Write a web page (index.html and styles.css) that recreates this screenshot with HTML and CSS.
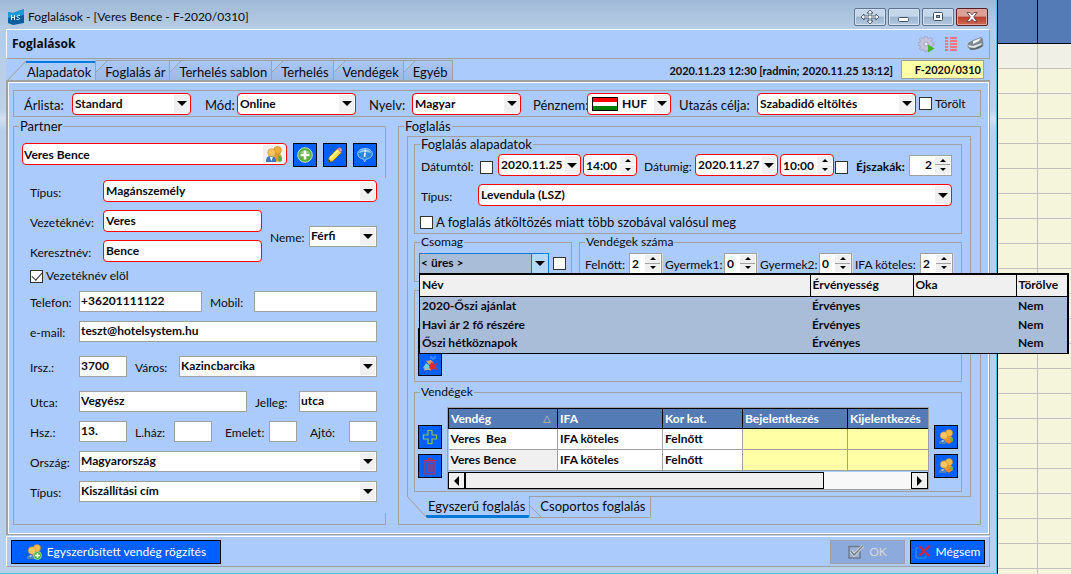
FILE: index.html
```html
<!DOCTYPE html>
<html lang="hu">
<head>
<meta charset="utf-8">
<title>Foglalások - [Veres Bence - F-2020/0310]</title>
<link rel="stylesheet" href="styles.css">
</head>
<body>
<svg class="defs" aria-hidden="true">
  <symbol id="people" viewBox="0 0 16 16">
    <path d="M8 12c0-4 1.500-5 4-5s3.500 2 3.500 6l-2 1.500H9z" fill="#e39a2e"/>
    <path d="M12 9l3 1 .5 4-3 1z" fill="#4db33d"/>
    <circle cx="11.300" cy="4" r="3.600" fill="#f0ac38" stroke="#b97a1a" stroke-width=".5"/>
    <path d="M.5 15c-.3-4 1.500-5.500 4.500-5.500S10 11 10 15z" fill="#3f78c2"/>
    <path d="M4 10l1.500 4L7 10z" fill="#fff"/>
    <circle cx="5.800" cy="6.200" r="3.700" fill="#f7c35c" stroke="#bd8120" stroke-width=".5"/>
  </symbol>
  <symbol id="people-pair" viewBox="0 0 16 16">
    <path d="M6 13c0-4 2-6 5-6s4 2 4 5l-3 2z" fill="#ee9a28"/>
    <path d="M12 9l3 0v3l-2 1z" fill="#5fb84a"/>
    <circle cx="11" cy="4" r="3.600" fill="#f8bc48" stroke="#c27e1c" stroke-width=".5"/>
    <path d="M1 15c0-3 1-4 4-4l4 1-1 3z" fill="#4b80bd"/>
    <path d="M3 12l2 1 1-2z" fill="#dfeaf8"/>
    <circle cx="6" cy="6.500" r="3.700" fill="#fbc65f" stroke="#c88927" stroke-width=".5"/>
    <path d="M7 12l4-2 2 2-2 3z" fill="#f3822b"/>
  </symbol>
  <symbol id="add" viewBox="0 0 16 16">
    <circle cx="8" cy="8" r="7.300" fill="#5cae3c" stroke="#d5ecd0" stroke-width=".9"/>
    <path d="M3 6a5.500 4.500 0 0 1 10 0z" fill="#8fce6f"/>
    <path d="M6.700 3.500h2.600v3.200h3.200v2.600H9.300v3.200H6.700V9.300H3.500V6.700h3.200z" fill="#fff"/>
  </symbol>
  <symbol id="pencil" viewBox="0 0 16 16">
    <path d="M1 15l1.200-5L10.500 1.500l4 4L6 14z" fill="#ffdf4d" stroke="#8b6a12" stroke-width=".8"/>
    <path d="M3 11.500L11.500 3" stroke="#fff6b5" stroke-width="1.500"/>
    <path d="M10.500 2L12 .7c1.500-.7 3.700 1.500 3 3L14 5.500z" fill="#e89ba0" stroke="#7e5252" stroke-width=".5"/>
    <path d="M1 15l.8-2.500L3.500 14z" fill="#222"/>
  </symbol>
  <symbol id="info" viewBox="0 0 16 16">
    <path d="M8 1.500c4 0 7.300 2 7.300 5.300S12 12 9 12l-1.500 3-1-3C3 11.800.7 9.500.7 6.800.7 3.500 4 1.500 8 1.500z" fill="#2f87dd" stroke="#a9d8ff" stroke-width=".9"/>
    <path d="M2 6c1-5 11-5 12 0-3-1.500-9-1.500-12 0z" fill="#8dc6f7"/>
    <path d="M8.300 3v1.400M8.100 5.500L7.500 10" stroke="#fff" stroke-width="1.600"/>
  </symbol>
  <symbol id="plus-outline" viewBox="0 0 16 16">
    <path d="M6 1.500h4V6h4.500v4H10v4.500H6V10H1.500V6H6z" fill="none" stroke="#8bc34a" stroke-width="1.200"/>
  </symbol>
  <symbol id="trash" viewBox="0 0 16 18">
    <path d="M3 5h10v12H3zM1.500 3.500h13M5.500 3.500l1-2h3l1 2M6 7v8M8 7v8M10 7v8" fill="none" stroke="#c22f51" stroke-width="1.200"/>
  </symbol>
  <symbol id="gift" viewBox="0 0 16 16">
    <path d="M4 5l5-1 3 3-4 3z" fill="#d9a066"/>
    <path d="M1 12l3-5 4 3 1 3-4 1z" fill="#7fc6e8"/>
    <path d="M7 9l3-3 2 2 3-1-1 3 1 4-4-1-3 2z" fill="#d92b35"/>
    <path d="M9 0v3M11 1v3M13 0v3" stroke="#7fb6ff" stroke-width=".8"/>
    <path d="M2 14l4-1 3 1" stroke="#e8b070" fill="none"/>
  </symbol>
</svg>

<div class="desktop">
<main class="window">
  <header class="titlebar">
    <svg class="app-icon" viewBox="0 0 16 16"><path d="M0 3l5 1 11-4v14L5 16l-5-2z" fill="#0b5e9e"/><path d="M0 3l5 1 11-4v6L0 9z" fill="#1f9ad8"/><path d="M3.500 6v5M6.500 6v5M3.500 8.500h3M12 6.500c-3-1-4 1.500-2 2s2.500 2.500-1.500 2" fill="none" stroke="#d9f1ff"/></svg>
    <h1 class="title">Foglalások - [Veres Bence - F-2020/0310]</h1>
    <div class="win-buttons">
      <button class="win" aria-label="Mozgatás"><svg width="18" height="14" viewBox="0 0 18 14"><path d="M9 0l3 3h-2v3h5V4l3 3-3 3V8h-5v3h2l-3 3-3-3h2V8H3v2L0 7l3-3v2h5V3H6z" fill="#f2f6fb" stroke="#3b4a5c" stroke-width=".8"/></svg></button>
      <button class="win" aria-label="Kis méret"><svg width="12" height="12" viewBox="0 0 12 12"><rect x=".5" y="6.500" width="10" height="4" rx="1" fill="#fff" stroke="#41536a"/></svg></button>
      <button class="win" aria-label="Teljes méret"><svg width="12" height="12" viewBox="0 0 12 12"><rect x="1.500" y="1.500" width="9" height="8" rx="1" fill="#fff" stroke="#41536a"/><rect x="4.500" y="4.500" width="3" height="2" fill="#9ab" stroke="#41536a"/></svg></button>
      <button class="win close" aria-label="Bezárás"><svg width="12" height="12" viewBox="0 0 12 12"><path d="M1 1.500h3l2 2.300 2-2.300h3L7.700 6l3.300 4.500H8L6 8.200 4 10.500H1L4.300 6z" fill="#fff" stroke="#5b3a40" stroke-width=".9"/></svg></button>
    </div>
  </header>

  <section class="headline">
    <h2>Foglalások</h2>
    <div class="tools">
      <svg width="17" height="17" viewBox="0 0 17 17"><path d="M7 0h2l.5 2 1.500.6L13 1.500 14.500 3l-1 2 .6 1.500 2 .5v2l-2 .5-.6 1.500 1 2-1.500 1.500-2-1-1.500.6L9 16H7l-.5-2-1.500-.6-2 1L1.500 13l1-2L2 9.500 0 9V7l2-.5L2.500 5l-1-2L3 1.500l2 1L6.500 2z" fill="#c3c3dc" stroke="#9494b2" stroke-width=".6"/><circle cx="8" cy="8" r="2" fill="#e6ecfb" stroke="#8989a8" stroke-width=".7"/><path d="M10 8.500l6.500 4-6.500 4z" fill="#45b52d"/></svg>
      <svg width="12" height="14" viewBox="0 0 12 14"><path d="M0 1h3M0 4h3M0 7h3M0 10h3M0 13h3M5 1h7M5 4h7M5 7h7M5 10h7M5 13h7" stroke="#fb7480" stroke-width="2"/></svg>
      <svg width="17" height="14" viewBox="0 0 17 14"><path d="M1 6l5-3 8-3 2 2 .5 7-5 3-8 1-3-3z" fill="#7d8890"/><path d="M6 4l8-3-2 3-6 3z" fill="#eef3f5"/><path d="M1 8l5 1 9-3-1 2-7 3-5-1z" fill="#dfe6e8"/><path d="M3 12l5 0 7-3" stroke="#45525a" fill="none"/></svg>
    </div>
  </section>

  <nav class="tabs">
    <button class="tab active">Alapadatok</button><button class="tab">Foglalás ár</button><button class="tab">Terhelés sablon</button><button class="tab">Terhelés</button><button class="tab">Vendégek</button><button class="tab">Egyéb</button>
    <span class="stamp">2020.11.23 12:30 [radmin; 2020.11.25 13:12]</span>
    <input class="code" aria-label="Foglalás száma" value="F-2020/0310">
  </nav>

  <section class="page">
    <div class="filters">
      <label for="arlista">Árlista:</label>
      <span class="combo req"><select id="arlista"><option>Standard</option></select><i class="arrow"></i></span>
      <label for="mod">Mód:</label>
      <span class="combo req"><select id="mod"><option>Online</option></select><i class="arrow"></i></span>
      <label for="nyelv">Nyelv:</label>
      <span class="combo req"><select id="nyelv"><option>Magyar</option></select><i class="arrow"></i></span>
      <label for="penznem">Pénznem:</label>
      <span class="combo req flagged"><i class="flag"></i><select id="penznem"><option>HUF</option></select><i class="arrow"></i></span>
      <label for="cel">Utazás célja:</label>
      <span class="combo req"><select id="cel"><option>Szabadidő eltöltés</option></select><i class="arrow"></i></span>
      <span class="check"><input type="checkbox" id="torolt"><label for="torolt">Törölt</label></span>
    </div>

    <div class="columns">
      <fieldset class="box partner">
        <legend>Partner</legend>
        <div class="search">
          <span class="field req lookup"><input aria-label="Partner" value="Veres Bence"><button class="pick" aria-label="Partner keresése"><svg width="18" height="17"><use href="#people"/></svg></button></span>
          <button class="sq" aria-label="Új partner"><svg width="16" height="16"><use href="#add"/></svg></button>
          <button class="sq" aria-label="Szerkesztés"><svg width="16" height="16"><use href="#pencil"/></svg></button>
          <button class="sq" aria-label="Információ"><svg width="16" height="16"><use href="#info"/></svg></button>
        </div>
        <div class="form names">
          <label for="ptipus">Típus:</label>
          <span class="combo req wide"><select id="ptipus"><option>Magánszemély</option></select><i class="arrow"></i></span>
          <label for="vnev">Vezetéknév:</label>
          <input class="text req" id="vnev" value="Veres">
          <label class="tall" for="neme">Neme:</label>
          <span class="combo tall"><select id="neme"><option>Férfi</option></select><i class="arrow"></i></span>
          <label for="knev">Keresztnév:</label>
          <input class="text req" id="knev" value="Bence">
        </div>
        <div class="check order"><input type="checkbox" id="elol" checked><label for="elol">Vezetéknév elöl</label></div>
        <div class="form row phone">
          <label for="tel">Telefon:</label><input class="text" id="tel" value="+36201111122">
          <label for="mobil">Mobil:</label><input class="text" id="mobil">
        </div>
        <div class="form row single"><label for="email">e-mail:</label><input class="text" id="email" value="teszt@hotelsystem.hu"></div>
        <div class="form row city">
          <label for="irsz">Irsz.:</label><input class="text" id="irsz" value="3700">
          <label for="varos">Város:</label><span class="combo"><select id="varos"><option>Kazincbarcika</option></select><i class="arrow"></i></span>
        </div>
        <div class="form row street">
          <label for="utca">Utca:</label><input class="text" id="utca" value="Vegyész">
          <label for="jelleg">Jelleg:</label><input class="text" id="jelleg" value="utca">
        </div>
        <div class="form row house">
          <label for="hsz">Hsz.:</label><input class="text" id="hsz" value="13.">
          <label for="lhaz">L.ház:</label><input class="text" id="lhaz">
          <label for="emelet">Emelet:</label><input class="text" id="emelet">
          <label for="ajto">Ajtó:</label><input class="text" id="ajto">
        </div>
        <div class="form row single"><label for="orszag">Ország:</label><span class="combo"><select id="orszag"><option>Magyarország</option></select><i class="arrow"></i></span></div>
        <div class="form row single"><label for="ctipus">Típus:</label><span class="combo"><select id="ctipus"><option>Kiszállítási cím</option></select><i class="arrow"></i></span></div>
      </fieldset>

      <fieldset class="box booking">
        <legend>Foglalás</legend>
        <div class="sheet">
          <fieldset class="box basics">
            <legend>Foglalás alapadatok</legend>
            <div class="dates">
              <label for="tol">Dátumtól:</label>
              <input type="checkbox" aria-label="Dátumtól rögzített">
              <span class="combo req"><select id="tol"><option>2020.11.25</option></select><i class="arrow narrow"></i></span>
              <span class="spin req"><input aria-label="Érkezés ideje" value="14:00"><span class="steps"><button aria-label="Fel"></button><button aria-label="Le"></button></span></span>
              <label for="ig">Dátumig:</label>
              <span class="combo req"><select id="ig"><option>2020.11.27</option></select><i class="arrow narrow"></i></span>
              <span class="spin req"><input aria-label="Távozás ideje" value="10:00"><span class="steps"><button aria-label="Fel"></button><button aria-label="Le"></button></span></span>
              <input type="checkbox" aria-label="Dátumig rögzített">
              <label for="ej" class="strong">Éjszakák:</label>
              <span class="spin right"><input id="ej" value="2"><span class="steps"><button aria-label="Fel"></button><button aria-label="Le"></button></span></span>
            </div>
            <div class="room">
              <label for="szoba">Típus:</label>
              <span class="combo req"><select id="szoba"><option>Levendula (LSZ)</option></select><i class="arrow"></i></span>
            </div>
            <div class="check long"><input type="checkbox" id="tobb"><label for="tobb">A foglalás átköltözés miatt több szobával valósul meg</label></div>
          </fieldset>

          <div class="pair">
            <fieldset class="box package">
              <legend>Csomag</legend>
              <div class="package-row">
                <span class="combo open"><select aria-label="Csomag"><option>&lt; üres &gt;</option></select><i class="arrow"></i></span>
                <input type="checkbox" aria-label="Csomag rögzített">
              </div>
              <table class="dropdown">
                <colgroup><col><col class="c-103"><col class="c-103"><col class="c-52"></colgroup>
                <thead><tr><th>Név</th><th>Érvényesség</th><th>Oka</th><th>Törölve</th></tr></thead>
                <tbody>
                  <tr><td>2020-Őszi ajánlat</td><td>Érvényes</td><td></td><td>Nem</td></tr>
                  <tr><td>Havi ár 2 fő részére</td><td>Érvényes</td><td></td><td>Nem</td></tr>
                  <tr><td>Őszi hétköznapok</td><td>Érvényes</td><td></td><td>Nem</td></tr>
                </tbody>
              </table>
            </fieldset>
            <fieldset class="box counts">
              <legend>Vendégek száma</legend>
              <div class="count-row">
                <label for="felnott">Felnőtt:</label><span class="spin"><input id="felnott" value="2"><span class="steps"><button aria-label="Fel"></button><button aria-label="Le"></button></span></span>
                <label for="gy1">Gyermek1:</label><span class="spin"><input id="gy1" value="0"><span class="steps"><button aria-label="Fel"></button><button aria-label="Le"></button></span></span>
                <label for="gy2">Gyermek2:</label><span class="spin"><input id="gy2" value="0"><span class="steps"><button aria-label="Fel"></button><button aria-label="Le"></button></span></span>
                <label for="ifa">IFA köteles:</label><span class="spin"><input id="ifa" value="2"><span class="steps"><button aria-label="Fel"></button><button aria-label="Le"></button></span></span>
              </div>
            </fieldset>
          </div>

          <div class="box extras">
            <button class="sq" aria-label="Hozzáadás"></button>
            <button class="sq" aria-label="Kedvezmény"><svg width="16" height="16"><use href="#gift"/></svg></button>
          </div>

          <fieldset class="box guests">
            <legend>Vendégek</legend>
            <div class="guest-row">
              <div class="side">
                <button class="sq" aria-label="Vendég hozzáadása"><svg width="16" height="16"><use href="#plus-outline"/></svg></button>
                <button class="sq" aria-label="Vendég törlése"><svg width="16" height="18"><use href="#trash"/></svg></button>
              </div>
              <div class="grid">
                <table>
                  <colgroup><col class="g-1"><col class="g-2"><col class="g-3"><col class="g-2"><col></colgroup>
                  <thead><tr><th><span class="sorted">Vendég<svg width="8" height="8" viewBox="0 0 8 8"><path d="M4 .8L7.300 7.500H.7z" fill="none" stroke="#b9b9a8" stroke-width=".8"/></svg></span></th><th>IFA</th><th>Kor kat.</th><th>Bejelentkezés</th><th>Kijelentkezés</th></tr></thead>
                  <tbody>
                    <tr><td class="two">Veres  Bea</td><td>IFA köteles</td><td>Felnőtt</td><td class="hot"></td><td class="hot"></td></tr>
                    <tr><td class="sel">Veres Bence</td><td>IFA köteles</td><td>Felnőtt</td><td class="hot"></td><td class="hot"></td></tr>
                  </tbody>
                </table>
                <div class="scroll">
                  <button aria-label="Balra"><i class="tri left"></i></button><span class="thumb"></span><span class="track"></span><button aria-label="Jobbra"><i class="tri"></i></button>
                </div>
              </div>
              <div class="side">
                <button class="sq" aria-label="Bejelentkezés"><svg width="16" height="16"><use href="#people-pair"/></svg></button>
                <button class="sq" aria-label="Kijelentkezés"><svg width="16" height="16"><use href="#people-pair"/></svg></button>
              </div>
            </div>
          </fieldset>
        </div>
        <nav class="low-tabs"><button class="low active">Egyszerű foglalás</button><button class="low">Csoportos foglalás</button></nav>
      </fieldset>
    </div>
  </section>

  <footer class="footer">
    <button class="cmd guest"><svg width="16" height="16" viewBox="0 0 16 16"><use href="#people-pair"/><circle cx="11.500" cy="11.500" r="4" fill="#4fae3a" stroke="#d8f0d0" stroke-width=".6"/><path d="M11.500 9v5M9 11.500h5" stroke="#fff" stroke-width="1.400"/></svg>Egyszerűsített vendég rögzítés</button>
    <button class="cmd ok" disabled><svg width="16" height="14" viewBox="0 0 16 14"><path d="M1 1.500h11v11.500H1z" fill="#9db3d6" stroke="#6d7a90" stroke-width="1.500"/><path d="M3 6l3 4L15 .8" fill="none" stroke="#e6e6e6" stroke-width="3"/><path d="M3 6l3 4L15 .8" fill="none" stroke="#737b88" stroke-width="1.500"/></svg>OK</button>
    <button class="cmd cancel"><svg width="16" height="14" viewBox="0 0 16 14"><path d="M3 3H1v10h10v-3" fill="none" stroke="#2f9bd8"/><path d="M4 1l10 10M15 .5L4 11" stroke="#d4253c" stroke-width="2"/></svg>Mégsem</button>
  </footer>
</main>

<aside class="calendar">
  <div class="cal-head"></div><div class="cal-head"></div>
</aside>
</div>
</body>
</html>
```

FILE: styles.css
```css
* { box-sizing: border-box; }

body {
  margin: 0;
  font: 12px/14px Lato, "Open Sans", sans-serif;
  color: #0a0a14;
}

button, input, select { font: inherit; color: inherit; margin: 0; }
button { padding: 0; cursor: default; }
i { font-style: normal; }
svg { display: block; flex: none; }
.defs { position: absolute; width: 0; height: 0; }

.desktop { display: flex; min-height: 100vh; }

/* window frame */
.window {
  flex: 1;
  min-width: 0;
  display: flex;
  flex-direction: column;
  padding: 0 7px 6px 6px;
  background: linear-gradient(#9fb9d6, #b6cce4 28px, #bdd2e9 110px, #d3e1f0 118px, #b9d0ea 130px);
  border-right: 1px solid #000;
  border-bottom: 1px solid #38c4dc;
  box-shadow: inset -1px 0 #4cc3e4;
}

.titlebar { display: flex; align-items: center; height: 29px; padding: 5px 2px 0; gap: 4px; }
.app-icon { width: 16px; height: 16px; }
.title { flex: 1; margin: 0; font-weight: normal; font-size: 12px; line-height: 16px; }
.win-buttons { display: flex; gap: 2px; }
.win {
  display: grid;
  place-items: center;
  width: 32px;
  height: 18px;
  border: 1px solid #5d7390;
  border-radius: 2px;
  background: linear-gradient(#c4d6ea 45%, #9db5d0 50%, #b4c9e0);
  box-shadow: inset 0 0 0 1px #d3e1f1;
}
.win.close {
  border-color: #5a1f25;
  background: linear-gradient(#dba196 45%, #b9402c 50%, #cf6a50);
  box-shadow: inset 0 0 0 1px #dba79e;
}

.headline {
  display: flex;
  align-items: center;
  justify-content: space-between;
  height: 30px;
  padding: 0 5px;
  background: #accbfd;
  border: 1px solid #a0a0a0;
  border-top-color: #fff;
  border-left-color: #fff;
}
.headline h2 { margin: 0; font: bold 12px/18px "Open Sans", sans-serif; }
.tools { display: flex; align-items: center; gap: 10px; }

/* main tabs */
.tabs {
  display: flex;
  height: 21px;
  padding: 1px 6px 0 1px;
  background: #accbfd;
}
.tab {
  border: 0;
  border-top: 1px solid #a0a0a0;
  border-right: 1px solid #a0a0a0;
  padding: 3px 4px 0 9px;
  font-size: 13px;
  text-align: right;
  white-space: nowrap;
  background:
    linear-gradient(to bottom right, #accbfd 46%, #a0a0a0 50%, transparent 54%) 0 0 / 11px 11px no-repeat,
    linear-gradient(#a9c7f8, #9cb9e4);
}
.tab.active {
  padding-left: 20px;
  border-top-color: #accbfd;
  background:
    linear-gradient(to bottom right, #accbfd 47%, #a0a0a0 50%, transparent 53%) 0 0 / 19px 20px no-repeat,
    linear-gradient(#0078d7, #0078d7) 19px 0 / 100% 2px no-repeat,
    #accbfd;
}
.stamp { margin-left: auto; padding: 4px 8px 0 0; font-weight: bold; font-size: 11px; white-space: nowrap; }
.code {
  width: 83px;
  height: 19px;
  padding: 0 2px;
  border: 1px solid #a0a0a0;
  background: #ffffa6;
  font-weight: bold;
  font-size: 11px;
  text-align: right;
}

.page {
  flex: 1;
  padding: 8px 8px 8px 5px;
  background: #accbfd;
  border: 2px solid #a0a0a0;
  border-bottom-width: 1px;
  border-right-width: 1px;
  box-shadow: inset 1px 1px #fff, inset -1px -1px #fff;
}

/* field parts */
.box { margin: 0; padding: 0; min-width: 0; border: 1px solid #a0a0a0; }
legend { padding: 0 1px; height: 14px; }
.partner > legend, .booking > legend, .basics > legend { font-size: 13px; }
.partner > legend, .booking > legend { margin-left: -3px; }
.package > legend { margin-left: 1px; }
.guests > legend { margin-left: 2px; }
label { padding-top: 3px; white-space: nowrap; }

.combo, .field, .spin {
  display: grid;
  grid-template-columns: 1fr auto;
  min-width: 0;
  height: 21px;
  background: #fff;
  border: 1px solid #a0a0a0;
}
.text { width: 100%; min-width: 0; height: 21px; padding: 0 1px 3px; border: 1px solid #a0a0a0; background: #fff; font-weight: bold; outline: 0; }
.combo.req, .field.req, .spin.req, .text.req { height: 22px; border: 1px solid #f00; border-radius: 4px; }
.text.req { padding: 0 2px 1px; }
.combo select, .field input, .spin input {
  grid-area: 1 / 1;
  width: 100%;
  min-width: 0;
  height: 18px;
  padding: 0 1px;
  border: 0;
  outline: 0;
  background: transparent;
  font-weight: bold;
  appearance: none;
}
.combo.req select { padding-left: 2px; }
.combo.req select, .field.req input, .spin.req input { height: 20px; }
.arrow { display: grid; place-items: center; width: 15px; margin: 1px; background: #f0f0f0; pointer-events: none; }
.arrow::before { content: ""; border: 5px solid transparent; border-top-color: #000; border-bottom: 0; }
.arrow.narrow { width: 14px; }
.spin input { padding: 0 2px; }
.steps { display: grid; grid-template-rows: 1fr 1fr; width: 15px; margin: 1px; background: #f0f0f0; }
.steps button { display: grid; place-items: center; border: 0; background: none; }
.steps button::before { content: ""; border: 3px solid transparent; border-bottom-color: #000; border-top: 0; }
.steps button:last-child::before { border-top: 3px solid #000; border-bottom: 0; }
.steps button:first-child { border-bottom: 1px solid #a0a0a0; }
.spin.req .steps button:first-child { border-bottom-color: #fff; }
.spin.right input { text-align: right; }

input[type="checkbox"] {
  appearance: none;
  flex: none;
  width: 13px;
  height: 13px;
  background: #fff;
  border: 1px solid #333;
}
input[type="checkbox"]:checked { display: grid; place-items: center; }
input[type="checkbox"]:checked::before {
  content: "";
  width: 9px;
  height: 5px;
  border: solid #333;
  border-width: 0 0 1px 1px;
  rotate: -48deg;
  margin-bottom: 3px;
}
.check { display: flex; align-items: center; gap: 3px; height: 14px; }
.check label { padding: 0; }
.check.long { font-size: 13px; }

.sq {
  display: grid;
  place-items: center;
  width: 24px;
  height: 24px;
  border: 1px solid #000;
  background: #0060ff;
}

/* filter bar */
.filters {
  display: grid;
  grid-template-columns: 48px 119px 14px 32px 119px 13px 43px 109px 12px 54px 84px 8px 78px 1fr 3px 61px;
  align-items: center;
  height: 27px;
  padding-left: 10px;
  border: 1px solid #a0a0a0;
}
.filters > label { font-size: 13px; }
.filters > :nth-child(3) { grid-column: 4; }
.filters > :nth-child(4) { grid-column: 5; }
.filters > :nth-child(5) { grid-column: 7; }
.filters > :nth-child(6) { grid-column: 8; }
.filters > :nth-child(7) { grid-column: 10; }
.filters > :nth-child(8) { grid-column: 11; }
.filters > :nth-child(9) { grid-column: 13; }
.filters > :nth-child(10) { grid-column: 14; }
.filters > :nth-child(11) { grid-column: 16; }
.combo.flagged { grid-template-columns: 32px 1fr auto; }
.combo.flagged select { grid-column: 2; }
.flag {
  align-self: center;
  width: 26px;
  height: 14px;
  margin-left: 4px;
  border: 1px solid #000;
  background: linear-gradient(#f00 33%, #fff 33% 66%, #008000 66%);
}

/* two main columns */
.columns { display: grid; grid-template-columns: 373fr 583fr; gap: 12px; margin-top: 2px; }

.partner {
  border-right-color: transparent;
  padding: 10px 8px 13px;
  background:
    linear-gradient(#a0a0a0, #a0a0a0) 100% 0 / 1px 52px no-repeat border-box,
    linear-gradient(#a0a0a0, #a0a0a0) 100% 100% / 1px 12px no-repeat border-box;
}
.search { display: flex; gap: 6px; margin-bottom: 13px; }
.lookup { flex: 1; }
.pick { display: grid; place-items: center; width: 22px; margin: 1px; border: 0; background: #f0f0f0; }
.form { display: grid; align-items: center; padding-left: 8px; }
.names { grid-template-columns: 73px 159px 8px 39px 1fr; row-gap: 8px; }
.names > label { grid-column: 1; }
.names > .wide { grid-column: 2 / -1; }
.names > .text { grid-column: 2; }
.names > label.tall { grid-area: 2 / 4 / span 2; }
.names > .combo.tall { grid-area: 2 / 5 / span 2; }
.order { margin: 7px 0 8px; padding-left: 8px; }
.row { margin-bottom: 9px; }
.phone label:nth-of-type(2), .city label:nth-of-type(2), .street label:nth-of-type(2), .house label:nth-of-type(2) { padding-left: 8px; }
.phone { grid-template-columns: 49px 1fr 52px 1fr; }
.single { grid-template-columns: 49px 1fr; }
.city { grid-template-columns: 49px 48px 52px 1fr; margin: 14px 0; }
.street { grid-template-columns: 49px 168px 52px 1fr; }
.house { grid-template-columns: 49px 48px 47px 38px 57px 28px 52px 1fr; }
.house label:nth-of-type(n + 3) { padding-left: 13px; }

.booking { padding: 3px 9px 5px 8px; }
.sheet { padding: 0 8px 4px 6px; border: 1px solid #a0a0a0; border-bottom: 0; }
.basics { padding: 3px 9px 4px 5px; }
.dates { display: grid; grid-template-columns: 60px 18px 83px 2px 54px 6px 52px 83px 2px 54px 1px 20px 1fr 43px; align-items: center; }
.dates > :nth-child(4) { grid-column: 5; }
.dates > :nth-child(5) { grid-column: 7; }
.dates > :nth-child(7) { grid-column: 10; }
.dates > :nth-child(8) { grid-column: 12; }
.dates > input { margin-top: 5px; }
.dates label, .room label { padding-left: 1px; }
.strong { font-weight: bold; }
.room { display: grid; grid-template-columns: 58px 1fr; align-items: center; margin: 8px 0 9px; }

.pair { display: grid; grid-template-columns: 158px 1fr; gap: 7px; margin-top: 1px; }
.package { position: relative; padding: 4px 4px 7px; }
.package-row { display: grid; grid-template-columns: 130px auto; gap: 4px; align-items: center; }
.combo.open { background: #aabdd8; border-color: #0078d7; }
.combo.open .arrow { margin: 0; width: 17px; background: #b4d8f8; border-left: 1px solid #0078d7; }
.counts { padding: 4px 8px 7px 5px; }
.count-row { display: grid; grid-template-columns: 44px 33px 62px 33px 62px 33px 1fr 33px; align-items: center; }
.count-row label:nth-of-type(n + 2) { padding-left: 3px; }
.count-row .spin { box-shadow: 1px 0 #d8d8d8; }

.dropdown {
  position: absolute;
  z-index: 2;
  top: 24px;
  left: 4px;
  width: 650px;
  table-layout: fixed;
  border-collapse: collapse;
  border: 1px solid #000;
  border-top-width: 2px;
  border-right-width: 2px;
  background: #aabdd8;
  font-weight: bold;
}
.dropdown th { height: 22px; padding: 0 2px; text-align: left; background: #f0f0f0; border: 1px solid #000; }
.dropdown td { height: 19px; padding: 0 2px; }
.c-103 { width: 103px; }
.c-52 { width: 52px; }

.extras { display: flex; flex-direction: column; justify-content: end; height: 92px; margin-top: 8px; padding: 0 3px 5px; }

.guests { margin-top: 3px; padding: 8px 3px 1px; }
.guest-row { display: flex; gap: 5px; align-items: start; }
.side { display: grid; gap: 5px; padding-top: 18px; }
.grid { flex: 1; min-width: 0; border: 1px solid #a0a0a0; }
.grid table { width: 100%; table-layout: fixed; border-collapse: collapse; font-weight: bold; }
.g-1 { width: 109px; }
.g-2 { width: 105px; }
.g-3 { width: 80px; }
.grid th { height: 20px; padding: 0 2px; text-align: left; color: #fff; background: #547bb5; border: 1px solid #000; }
.grid td { height: 21px; padding: 0 2px; background: #fff; border: 1px solid #a0a0a0; }
.grid th:last-child, .grid td:last-child { border-right: 0; }
.grid td:first-child { border-left: 0; }
.grid td.two { white-space: pre; }
.grid td.sel { background: #f0f0f0; }
.grid td.hot { background: #ffffa6; }
.sorted { display: flex; justify-content: space-between; align-items: center; padding-right: 4px; }
.scroll { display: flex; height: 17px; margin-top: 1px; background: #f8f8f8; }
.scroll button { display: grid; place-items: center; width: 17px; border: 1px solid #000; background: #f0f0f0; }
.thumb { flex: 359; border: 1px solid #000; background: #f0f0f0; }
.track { flex: 87; }
.tri { border: 5px solid transparent; border-left-color: #000; border-right: 0; }
.tri.left { border-right: 5px solid #000; border-left: 0; }

.low-tabs { display: flex; background: linear-gradient(#a0a0a0, #a0a0a0) 122px 0 / 100% 1px no-repeat; }
.low {
  height: 22px;
  padding: 0 4px 2px 10px;
  border: 0;
  border-right: 1px solid #a0a0a0;
  border-bottom: 1px solid #a0a0a0;
  border-radius: 0 0 2px 0;
  font-size: 13px;
  background: linear-gradient(to top right, #accbfd 46%, #a0a0a0 50%, transparent 54%) 0 100% / 11px 11px no-repeat;
}
.low.active {
  padding-left: 21px;
  border-bottom: 0;
  background:
    linear-gradient(to top right, #accbfd 47%, #a0a0a0 50%, transparent 53%) 0 0 / 20px 22px no-repeat,
    linear-gradient(#0078d7, #0078d7) 19px 100% / 100% 3px no-repeat;
}

/* footer */
.footer {
  display: flex;
  gap: 5px;
  height: 31px;
  margin-top: 1px;
  padding: 3px 4px;
  background: #accbfd;
  border: 1px solid #a0a0a0;
  border-top-color: #fff;
  border-left-color: #fff;
}
.cmd {
  display: flex;
  align-items: center;
  justify-content: center;
  gap: 5px;
  width: 75px;
  height: 24px;
  border: 1px solid #000;
  background: #0060ff;
  color: #fff;
}
.cmd.guest { width: 210px; margin-right: auto; }
.cmd.ok { background: #8caadc; border-color: #a0a0a0; color: #d8d8d8; }

/* room calendar behind the window */
.calendar {
  display: grid;
  grid-template-columns: 40px 1fr;
  grid-template-rows: 44px;
  width: 73px;
  background:
    linear-gradient(#c0c0c0, #c0c0c0) 39px 0 / 1px 100% no-repeat,
    linear-gradient(#f0f0e6, #f0f0e6) 0 44px / 100% 24px no-repeat,
    repeating-linear-gradient(#f5f5dc 0 24px, #c0c0c0 24px 25px) 0 44px,
    #f5f5dc;
}
.cal-head { background: #547bb5; border-bottom: 1px solid #000; }
.cal-head:first-child { border-right: 1px solid #000; }
```
